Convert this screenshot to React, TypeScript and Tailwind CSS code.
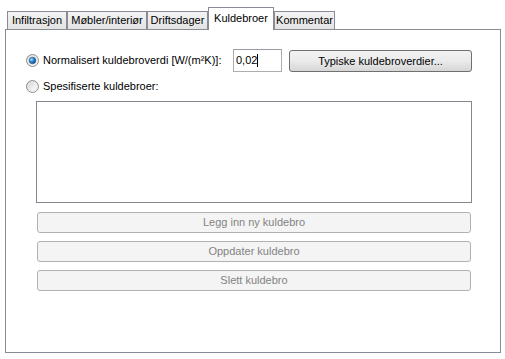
import React from 'react';

const font = { fontFamily: '"Liberation Sans", Arial, sans-serif' };

// Win7-style radio button
function Radio({ checked }: { checked?: boolean }) {
  return (
    <svg width="13" height="13" viewBox="0 0 13 13" className="shrink-0">
      <defs>
        <linearGradient id="rbg" x1="0" y1="0" x2="1" y2="1">
          <stop offset="0" stopColor="#cfcfcf" />
          <stop offset="0.6" stopColor="#f0f0f0" />
          <stop offset="1" stopColor="#ffffff" />
        </linearGradient>
        <radialGradient id="rdot" cx="0.35" cy="0.35" r="0.75">
          <stop offset="0" stopColor="#a6e3ff" />
          <stop offset="0.45" stopColor="#2a86cf" />
          <stop offset="1" stopColor="#0f3f7a" />
        </radialGradient>
      </defs>
      <circle cx="6.5" cy="6.5" r="6" fill="url(#rbg)" stroke="#8f8f8f" strokeWidth="1" />
      <circle cx="6.5" cy="6.5" r="4.5" fill="none" stroke="#e6e6e6" strokeWidth="0.8" />
      {checked && <circle cx="6.5" cy="6.5" r="3.3" fill="url(#rdot)" stroke="#1c4d86" strokeWidth="0.5" />}
    </svg>
  );
}

const tabs = [
  { label: 'Infiltrasjon', w: 'w-[60px]' },
  { label: 'Møbler/interiør', w: 'w-[80px]' },
  { label: 'Driftsdager', w: 'w-[61px]' },
  { label: 'Kuldebroer', w: 'w-[66px]', active: true },
  { label: 'Kommentar', w: 'w-[61px]' },
];

function DisabledButton({ children }: { children: React.ReactNode }) {
  return (
    <div className="w-[434px] h-[21px] ml-[31px] flex items-center justify-center rounded-[3px] border border-[#adb2b5] bg-[#f4f4f4] text-[11px] text-[#838383]">
      {children}
    </div>
  );
}

export default function App() {
  return (
    <div className="w-[505px] h-[359px] bg-white text-black pl-[5px] pt-[7px]" style={font}>
      {/* Tab strip */}
      <div className="flex items-end h-[22px] ml-[2px]">
        {tabs.map((t) =>
          t.active ? (
            <div
              key={t.label}
              className={`${t.w} h-[23px] -mb-px relative z-10 bg-white border border-b-0 border-[#898c95] flex justify-center pt-[2px] text-[11px]`}
            >
              {t.label}
            </div>
          ) : (
            <div
              key={t.label}
              className={`${t.w} h-[18px] bg-gradient-to-b from-[#f3f3f3] to-[#e3e3e3] border border-b-0 border-[#898c95] flex justify-center items-center text-[11px]`}
            >
              {t.label}
            </div>
          )
        )}
      </div>

      {/* Panel */}
      <div className="w-[496px] h-[324px] border border-[#898c95] bg-white flex flex-col">
        <div className="flex items-center mt-[19px] ml-[20px] h-[23px]">
          <div className="w-[207px] flex items-center gap-[4px] text-[11px]">
            <Radio checked />
            <span>Normalisert kuldebroverdi [W/(m²K)]:</span>
          </div>
          <div className="w-[49px] h-[23px] border border-[#abadb3] border-t-[#999ba3] bg-white flex items-center pl-[2px] text-[11px]">
            <span>0,02</span>
            <span className="w-px h-[13px] bg-black" />
          </div>
          <div className="w-[183px] h-[22px] ml-[7px] mt-px flex items-center justify-center rounded-[3px] border border-[#707070] bg-gradient-to-b from-[#f2f2f2] via-[#ebebeb] to-[#d6d6d6] text-[11px]">
            Typiske kuldebroverdier...
          </div>
        </div>

        <div className="flex items-center gap-[4px] mt-[8px] ml-[20px] h-[13px] text-[11px]">
          <Radio />
          <span>Spesifiserte kuldebroer:</span>
        </div>

        <div className="w-[436px] h-[102px] ml-[30px] mt-[8px] border border-[#828790] bg-white" />

        <div className="flex flex-col gap-[8px] mt-[9px]">
          <DisabledButton>Legg inn ny kuldebro</DisabledButton>
          <DisabledButton>Oppdater kuldebro</DisabledButton>
          <DisabledButton>Slett kuldebro</DisabledButton>
        </div>
      </div>
    </div>
  );
}
